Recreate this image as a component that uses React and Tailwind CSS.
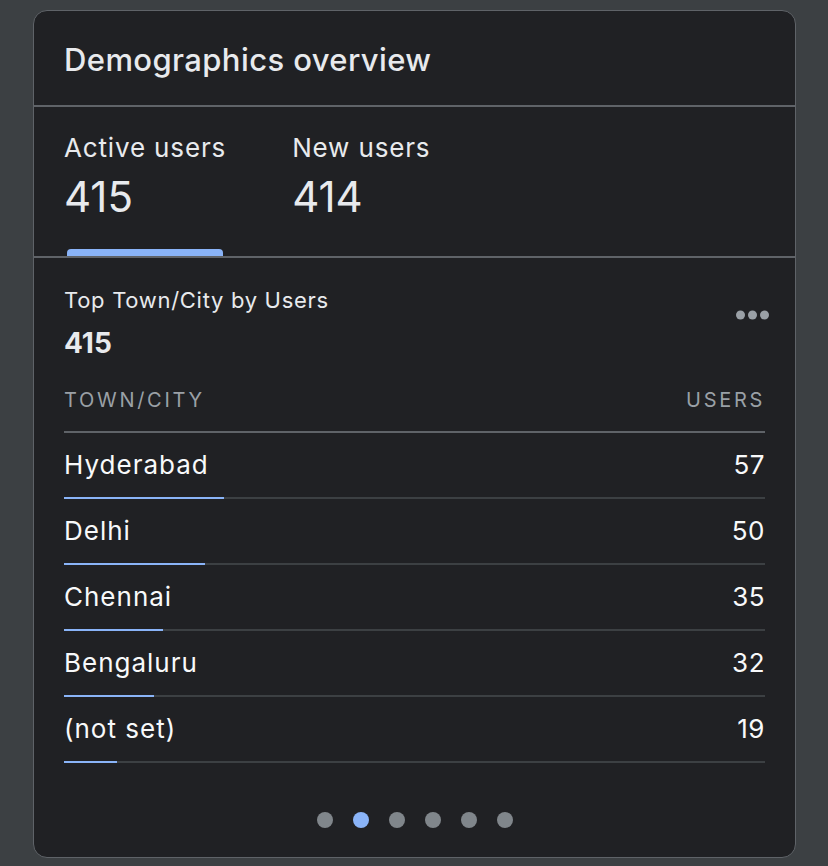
import React from "react";

const rows = [
  { name: "Hyderabad", v: 57 },
  { name: "Delhi", v: 50 },
  { name: "Chennai", v: 35 },
  { name: "Bengaluru", v: 32 },
  { name: "(not set)", v: 19 },
];

export default function App() {
  return (
    <div
      className="min-h-[866px] w-[828px] bg-[#3c4043] pt-[10px] pl-[33px]"
      style={{ fontFamily: "Inter, Roboto, sans-serif" }}
    >
      <div className="flex h-[848px] w-[763px] flex-col rounded-[14px] border border-[#5f6368] bg-[#202124]">
        {/* header */}
        <div className="flex h-[96px] items-center border-b-2 border-[#5f6368] px-[30px] pt-[3px]">
          <h1 className="text-[31px] font-medium leading-[36px] tracking-[0.4px] text-[#e8eaed]">
            Demographics overview
          </h1>
        </div>

        {/* tabs */}
        <div className="flex gap-[66px] border-b-2 border-[#5f6368] px-[30px] pt-[26px]">
          <div className="flex flex-col">
            <div className="text-[26px] leading-[30px] tracking-[0.85px] text-[#e8eaed]">Active users</div>
            <div className="mt-[10px] text-[42px] leading-[48px] text-[#e8eaed]">415</div>
            <div className="mx-[3px] mt-[28px] h-[7px] rounded-t-[4px] bg-[#8ab4f8]" />
          </div>
          <div className="flex flex-col">
            <div className="text-[26px] leading-[30px] tracking-[0.85px] text-[#e8eaed]">New users</div>
            <div className="mt-[10px] text-[42px] leading-[48px] text-[#e8eaed]">414</div>
          </div>
        </div>

        {/* section */}
        <div className="flex flex-1 flex-col px-[30px] pt-[28px]">
          <div className="flex items-start justify-between">
            <div className="flex flex-col">
              <div className="text-[22px] leading-[28px] tracking-[0.7px] text-[#e8eaed]">Top Town/City by Users</div>
              <div className="mt-[12px] text-[28px] font-bold leading-[34px] text-[#e8eaed]">415</div>
            </div>
            <svg width="34" height="10" viewBox="0 0 34 10" className="mr-[-5px] mt-[24px]">
              <circle cx="4.5" cy="5" r="4.5" fill="#9aa0a6" />
              <circle cx="16.5" cy="5" r="4.5" fill="#9aa0a6" />
              <circle cx="28.5" cy="5" r="4.5" fill="#9aa0a6" />
            </svg>
          </div>

          <div className="mt-[28px] flex justify-between border-b-2 border-[#5f6368] pb-[19px] text-[20px] leading-[24px] tracking-[2.7px] text-[#9aa0a6]">
            <span>TOWN/CITY</span>
            <span>USERS</span>
          </div>

          {rows.map((r) => (
            <div key={r.name} className="flex flex-col">
              <div className="flex justify-between pt-[17px] pb-[17px] text-[26px] leading-[30px] text-[#f8f9fa]">
                <span className="tracking-[1px]">{r.name}</span>
                <span className="tracking-[0.5px]">{r.v}</span>
              </div>
              <div className="h-[2px] w-full bg-[#3c4043]">
                <div
                  className="h-[2px] bg-[#8ab4f8]"
                  style={{ width: `${(r.v / 249) * 100}%` }}
                />
              </div>
            </div>
          ))}

          <div className="mt-[49px] flex justify-center gap-[20px]">
            {[0, 1, 2, 3, 4, 5].map((i) => (
              <div
                key={i}
                className={
                  i === 1
                    ? "h-[16px] w-[16px] rounded-full bg-[#8ab4f8]"
                    : "h-[16px] w-[16px] rounded-full bg-[#80868b]"
                }
              />
            ))}
          </div>
        </div>
      </div>
    </div>
  );
}
